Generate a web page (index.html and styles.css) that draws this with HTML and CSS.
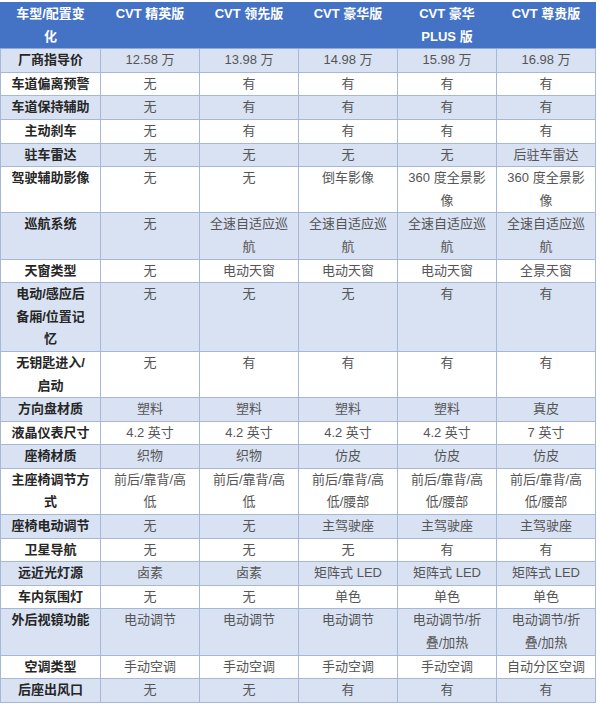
FILE: index.html
```html
<!DOCTYPE html>
<html lang="zh-CN">
<head>
<meta charset="utf-8">
<title>车型配置对比</title>
<link rel="stylesheet" href="styles.css">
</head>
<body>
<table class="spec">
<colgroup>
<col class="c-first"><col class="c-data"><col class="c-data"><col class="c-data"><col class="c-data"><col class="c-data">
</colgroup>
<thead>
<tr><th>车型/配置变化</th><th>CVT 精英版</th><th>CVT 领先版</th><th>CVT 豪华版</th><th>CVT 豪华 PLUS 版</th><th>CVT 尊贵版</th></tr>
</thead>
<tbody>
<tr><td>厂商指导价</td><td>12.58 万</td><td>13.98 万</td><td>14.98 万</td><td>15.98 万</td><td>16.98 万</td></tr>
<tr><td>车道偏离预警</td><td>无</td><td>有</td><td>有</td><td>有</td><td>有</td></tr>
<tr><td>车道保持辅助</td><td>无</td><td>有</td><td>有</td><td>有</td><td>有</td></tr>
<tr><td>主动刹车</td><td>无</td><td>有</td><td>有</td><td>有</td><td>有</td></tr>
<tr><td>驻车雷达</td><td>无</td><td>无</td><td>无</td><td>无</td><td>后驻车雷达</td></tr>
<tr><td>驾驶辅助影像</td><td>无</td><td>无</td><td>倒车影像</td><td>360 度全景影像</td><td>360 度全景影像</td></tr>
<tr><td>巡航系统</td><td>无</td><td>全速自适应巡航</td><td>全速自适应巡航</td><td>全速自适应巡航</td><td>全速自适应巡航</td></tr>
<tr><td>天窗类型</td><td>无</td><td>电动天窗</td><td>电动天窗</td><td>电动天窗</td><td>全景天窗</td></tr>
<tr><td>电动/感应后备厢/位置记忆</td><td>无</td><td>无</td><td>无</td><td>有</td><td>有</td></tr>
<tr><td>无钥匙进入/启动</td><td>无</td><td>有</td><td>有</td><td>有</td><td>有</td></tr>
<tr><td>方向盘材质</td><td>塑料</td><td>塑料</td><td>塑料</td><td>塑料</td><td>真皮</td></tr>
<tr><td>液晶仪表尺寸</td><td>4.2 英寸</td><td>4.2 英寸</td><td>4.2 英寸</td><td>4.2 英寸</td><td>7 英寸</td></tr>
<tr><td>座椅材质</td><td>织物</td><td>织物</td><td>仿皮</td><td>仿皮</td><td>仿皮</td></tr>
<tr><td>主座椅调节方式</td><td>前后/靠背/高低</td><td>前后/靠背/高低</td><td>前后/靠背/高低/腰部</td><td>前后/靠背/高低/腰部</td><td>前后/靠背/高低/腰部</td></tr>
<tr><td>座椅电动调节</td><td>无</td><td>无</td><td>主驾驶座</td><td>主驾驶座</td><td>主驾驶座</td></tr>
<tr><td>卫星导航</td><td>无</td><td>无</td><td>无</td><td>有</td><td>有</td></tr>
<tr><td>远近光灯源</td><td>卤素</td><td>卤素</td><td>矩阵式 LED</td><td>矩阵式 LED</td><td>矩阵式 LED</td></tr>
<tr><td>车内氛围灯</td><td>无</td><td>无</td><td>单色</td><td>单色</td><td>单色</td></tr>
<tr><td>外后视镜功能</td><td>电动调节</td><td>电动调节</td><td>电动调节</td><td>电动调节/折叠/加热</td><td>电动调节/折叠/加热</td></tr>
<tr><td>空调类型</td><td>手动空调</td><td>手动空调</td><td>手动空调</td><td>手动空调</td><td>自动分区空调</td></tr>
<tr><td>后座出风口</td><td>无</td><td>无</td><td>有</td><td>有</td><td>有</td></tr>
</tbody>
</table>
</body>
</html>
```

FILE: styles.css
```css
html, body {
  margin: 0;
  padding: 0;
  background: #ffffff;
}
body {
  padding-top: 2px;
  font-family: "Liberation Sans", "Noto Sans CJK SC", sans-serif;
  font-size: 13px;
}
.spec {
  border-collapse: collapse;
  table-layout: fixed;
  width: 595px;
}
.c-first { width: 100px; }
.c-data { width: 99px; }
.spec th,
.spec td {
  padding: 0 9px;
  line-height: 22.6px;
  text-align: center;
  vertical-align: top;
}
.spec th {
  background: #4472c4;
  color: #ffffff;
  font-weight: bold;
  border: 1px solid #4472c4;
  border-bottom-color: #8eaadb;
}
.spec td {
  color: #555555;
  border: 1px solid #a7b7d6;
}
.spec td:first-child {
  color: #262626;
  font-weight: bold;
  padding: 0 10px;
}
.spec tbody tr:nth-child(odd) td {
  background: #d9e2f3;
}
.spec tbody tr:nth-child(even) td {
  background: #ffffff;
}
```
